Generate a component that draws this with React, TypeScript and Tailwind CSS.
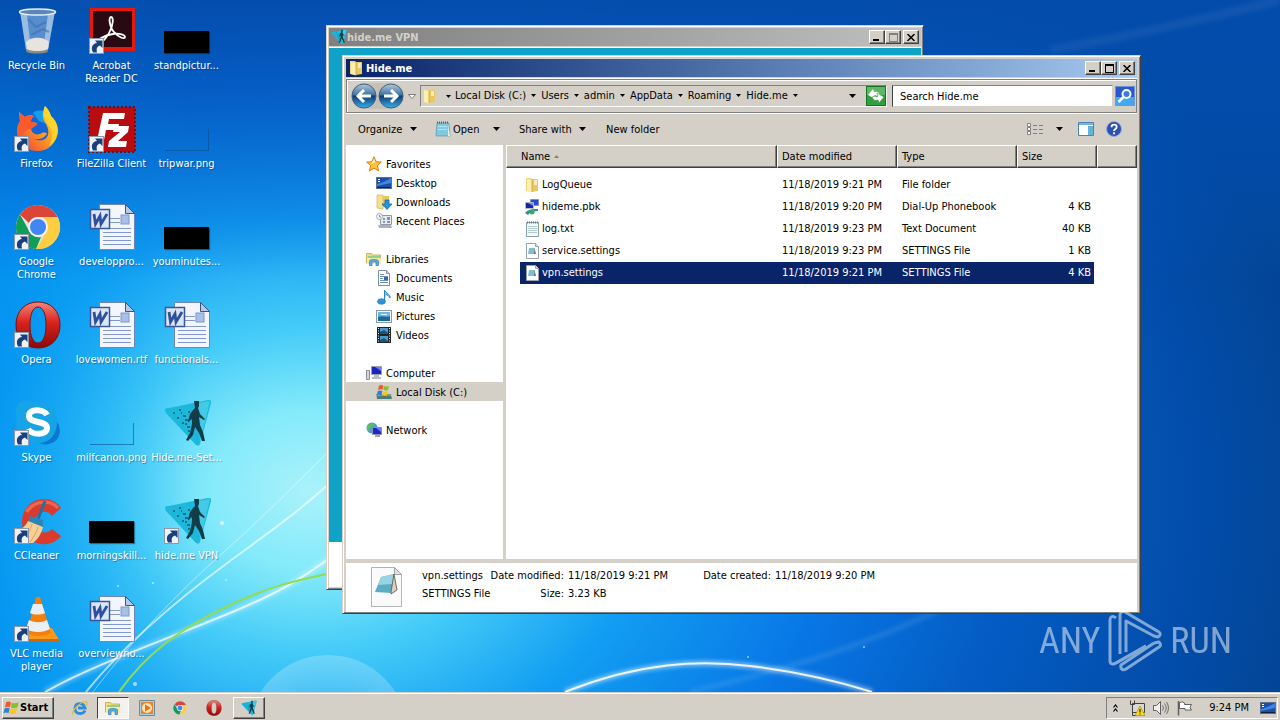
import type { ReactNode } from "react";

const frame =
    "flex flex-col border border-t-[#d4d0c8] border-l-[#d4d0c8] border-r-[#404040] border-b-[#404040] bg-[#d4d0c8] shadow-[inset_1px_1px_0_#fff,inset_-1px_-1px_0_#808080]";
const raised =
    "border border-t-white border-l-white border-r-[#404040] border-b-[#404040] bg-[#d4d0c8] shadow-[inset_-1px_-1px_0_#808080]";

/* ---------- wallpaper ---------- */

function Wallpaper() {
    return (
        <svg className="absolute inset-0 h-full w-full" viewBox="0 0 1280 692" preserveAspectRatio="none" aria-hidden="true">
            <defs>
                <radialGradient id="glow" gradientUnits="userSpaceOnUse" cx="310" cy="490" r="1000" gradientTransform="translate(310 490) scale(1 .8) translate(-310 -490)">
                    <stop offset="0" stopColor="#aaf2fa" />
                    <stop offset=".1" stopColor="#84eafa" />
                    <stop offset=".2" stopColor="#46ccf8" />
                    <stop offset=".34" stopColor="#129ef2" />
                    <stop offset=".52" stopColor="#0878e6" />
                    <stop offset=".7" stopColor="#045cc4" />
                    <stop offset=".9" stopColor="#024ca8" />
                    <stop offset="1" stopColor="#024596" />
                </radialGradient>
                <linearGradient id="leftShade" x1="0" x2="1" y1="0" y2="0">
                    <stop offset="0" stopColor="#0094f2" stopOpacity=".7" />
                    <stop offset="1" stopColor="#00a4f4" stopOpacity="0" />
                </linearGradient>
                <linearGradient id="topShade" x1="0" x2="0" y1="0" y2="1">
                    <stop offset="0" stopColor="#044cac" stopOpacity=".95" />
                    <stop offset=".4" stopColor="#0350b4" stopOpacity=".6" />
                    <stop offset="1" stopColor="#0358c8" stopOpacity="0" />
                </linearGradient>
                <radialGradient id="orb">
                    <stop offset="0" stopColor="#fff" stopOpacity="0" />
                    <stop offset="1" stopColor="#fff" stopOpacity=".22" />
                </radialGradient>
                <filter id="soft" x="-20%" y="-20%" width="140%" height="140%">
                    <feGaussianBlur stdDeviation="2" />
                </filter>
            </defs>
            <rect width="1280" height="692" fill="url(#glow)" />
            <rect width="190" height="692" fill="url(#leftShade)" />
            <rect width="1280" height="280" fill="url(#topShade)" />
            <circle cx="328" cy="735" r="80" fill="url(#orb)" />
            <g fill="none" stroke="#fff">
                <path d="M45 692C95 664 160 642 230 613S310 570 345 548" strokeWidth="5" opacity=".35" filter="url(#soft)" />
                <path d="M45 692C95 664 160 642 230 613S310 570 345 548" strokeWidth="2" opacity=".7" />
                <path d="M86 692C120 650 170 605 230 561S300 510 340 474" opacity=".6" strokeWidth="2" />
                <path d="M93 692C125 650 165 605 215 560S290 490 340 440" opacity=".45" />
                <path d="M565 692C640 662 700 660 750 666S840 682 872 692" strokeWidth="5" opacity=".5" filter="url(#soft)" />
                <path d="M565 692C640 662 700 660 750 666S840 682 872 692" strokeWidth="2" opacity=".85" />
                <path d="M690 692C780 670 860 650 960 600" strokeWidth="5" opacity=".1" filter="url(#soft)" />
                <path d="M1050 50C1110 40 1180 25 1280 0" strokeWidth="9" opacity=".05" filter="url(#soft)" />
            </g>
            <path d="M119 692C145 655 180 628 230 605S300 580 345 570" fill="none" stroke="#93dc50" strokeWidth="2" />
            <g fill="#fff" opacity=".6">
                <circle cx="222" cy="523" r="2" />
                <circle cx="135" cy="684" r="2" />
                <circle cx="226" cy="580" r="1" />
                <circle cx="153" cy="583" r="1" />
                <circle cx="118" cy="586" r="1" />
                <circle cx="864" cy="647" r="1" />
                <circle cx="748" cy="657" r="1" />
            </g>
        </svg>
    );
}

/* ---------- desktop icons, all on a 48px grid ---------- */

function Big({ children, shortcut }: { children: ReactNode; shortcut?: boolean }) {
    return (
        <svg className="h-12 w-12 shrink-0" viewBox="0 0 48 48" aria-hidden="true">
            {children}
            {shortcut && (
                <g>
                    <rect x="1.5" y="31.5" width="14" height="15" fill="#eef2f8" stroke="#8d98a8" />
                    <path d="M5 45.500c-2.500-5-.5-9 4-9.500l-2-2.500h7.500V41l-2.500-2.500c-3 1-4 3-3 7z" fill="#17407c" />
                </g>
            )}
        </svg>
    );
}

function RecycleBin() {
    return (
        <Big>
            <path d="M7 4l6 39c4 3 18 3 22 0l7-39z" fill="#8fb4dd" fillOpacity=".6" />
            <path d="M7 4l6 39 5 1-4-37zM42 4l-7 39-5 1 5-37z" fill="#dcebf8" fillOpacity=".5" />
            <path d="M13 35c6-6 18-5 23 0l-1 7c-5 3-16 3-21 0z" fill="#e6e4dc" />
            <path d="M15 12l8 8 10-5M18 28l12-6 6 3" stroke="#3d6fae" strokeWidth="2" fill="none" opacity=".6" />
            <ellipse cx="24.5" cy="5" rx="18" ry="3" fill="#5c86b8" stroke="#e4edf5" strokeWidth="1.5" />
            <path d="M13 42c5 3 17 3 22 0l-.5 3c-5 2-16 2-21 0z" fill="#8f8a7c" />
        </Big>
    );
}

function Acrobat() {
    return (
        <Big shortcut>
            <rect x="2" y="1" width="45" height="43" fill="#e5190d" />
            <rect x="5" y="4" width="39" height="36" fill="#2a0a12" />
            <path d="M23 10c3 0 2 8-1 14-3 7-8 12-11 11-3-2 6-7 14-8 7-1 12 1 12 3 0 3-7 0-11-5-4-4-6-15-3-15z" fill="none" stroke="#fff" strokeWidth="1.800" />
        </Big>
    );
}

function Firefox() {
    return (
        <Big shortcut>
            <defs>
                <linearGradient id="ff" x1="1" y1="0" x2="0" y2="1">
                    <stop offset="0" stopColor="#ffe13a" />
                    <stop offset=".5" stopColor="#ff9a1e" />
                    <stop offset="1" stopColor="#f0304a" />
                </linearGradient>
            </defs>
            <circle cx="26" cy="22" r="16" fill="#1565d8" />
            <path d="M20 8c5-4 12-3 16 3l-2 8-8-3z" fill="#12a0e8" />
            <path d="M32 1c3 3 5 6 6 10 7 6 8 15 6 20-3 10-11 15-19 15C12 46 4 38 4 27c0-5 1-8 3-11l-1-9 6 5c3-2 6-2 9-1-3 2-3 4-3 6l6 1c0 3-5 4-6 6 1 5 6 7 11 4 2-1 5 0 5 1-4 5-9 6-13 5 12 5 18-4 12-15-4-6-4-11-1-18z" fill="url(#ff)" />
            <path d="M32 1c3 3 5 6 6 10 7 6 8 15 6 20-1 4-4 8-8 10 5-9 3-17-2-23-4-6-4-12-2-17z" fill="#ffd92e" opacity=".8" />
            <path d="M7 16l-1-9 6 5c3-2 6-2 9-1-3 2-3 4-3 6l6 1c0 3-5 4-6 6-5 0-9 4-9 10-4-6-5-12-2-18z" fill="#fb5a30" />
        </Big>
    );
}

function FileZilla() {
    return (
        <Big shortcut>
            <rect x="1" y="2" width="46" height="45" fill="#b80c10" stroke="#7c0a10" strokeWidth="2" strokeDasharray="2 2" />
            <path d="M15 8h22l-1 6H21l-1 5h11l-1 6H18l-3 15H8z" fill="#fff" />
            <path d="M26 21h15l-1 6-10 9h9l-1 6H20l1-6 11-9h-7z" fill="#fff" />
        </Big>
    );
}

function ChromeDisc() {
    return (
        <g>
            <circle cx="25" cy="24" r="22" fill="#e2e2e2" />
            <path d="M25 2a22 22 0 0 1 19.500 12H25a10 10 0 0 0-9 6L7 11.500A22 22 0 0 1 25 2z" fill="#db4437" />
            <path d="M7 11.500l9.500 17A10 10 0 0 0 28 34l-5 12A22 22 0 0 1 7 11.500z" fill="#0f9d58" />
            <path d="M44.500 14A22 22 0 0 1 23 46l10.500-17a10 10 0 0 0 0-10 10 10 0 0 0-4-5z" fill="#ffcd40" />
            <circle cx="25" cy="24" r="10" fill="#f1f1f1" />
            <circle cx="25" cy="24" r="8" fill="#4285f4" />
        </g>
    );
}

function OperaDisc() {
    return (
        <g>
            <defs>
                <linearGradient id="op" x1="0" y1="0" x2="0" y2="1">
                    <stop offset="0" stopColor="#f4867a" />
                    <stop offset=".45" stopColor="#d8231c" />
                    <stop offset="1" stopColor="#8c0808" />
                </linearGradient>
            </defs>
            <path
                d="M25 1C12 1 3 10 3 24s9 23 22 23 22-9 22-23S38 1 25 1zm0 5c5 0 8 7 8 18s-3 18-8 18-8-7-8-18 3-18 8-18z"
                fillRule="evenodd"
                fill="url(#op)"
                stroke="#7b1010"
            />
        </g>
    );
}

function Skype() {
    return (
        <Big shortcut>
            <path d="M6 4c5-4 11-3 15-1 15-2 24 8 23 20 5 7 3 16-3 20-5 3-11 3-15 1C11 46 1 35 4 20 2 13 3 7 6 4z" fill="#16a4e6" />
            <path d="M44 23c5 7 3 16-3 20-5 3-11 3-15 1 10 0 18-8 18-21z" fill="#0a78d0" />
            <path d="M34 16c-3-6-18-7-18 1s18 4 18 12-16 7-19 1" fill="none" stroke="#fff" strokeWidth="6" />
        </Big>
    );
}

function CCleaner() {
    return (
        <Big shortcut>
            <path d="M48 11l-9 8c-5-8-17-4-17 6s11 14 17 7l9 7C36 54 10 48 9 25 9 1 38-5 48 11z" fill="#dc3a2c" />
            <path d="M12 14C20 2 38 0 46 10l-2 2C36 4 22 5 15 16z" fill="#f07a66" opacity=".7" />
            <path d="M32 4l-7 18" stroke="#24719f" strokeWidth="3" />
            <path d="M17 19l13 4v7l-15-5z" fill="#2b83b8" />
            <path d="M15 24l15 6c-2 8-6 13-10 16H9L2 35c6-2 10-5 13-11z" fill="#f5cf96" />
            <path d="M19 27c-2 7-5 11-7 15M25 30c-2 7-5 11-8 15" stroke="#d7a45f" fill="none" />
        </Big>
    );
}

function Vlc() {
    return (
        <Big shortcut>
            <path d="M9 33h30l7 12H6z" fill="#f79a1c" />
            <path d="M5 44h41v2H5z" fill="#d06a06" />
            <path d="M23 2h4l11 36c-6 4-18 4-24 0z" fill="#f57f0a" />
            <path d="M20 9h9l3 9c-4 2-11 2-15 0zM16 25c6 3 12 3 18 0l3 9c-7 4-17 4-24 0z" fill="#eceff2" />
        </Big>
    );
}

function WordDoc() {
    return (
        <Big>
            <path d="M11.500 1.500h26l9 9v36h-35z" fill="#f3f7fd" stroke="#6f86b8" />
            <path d="M37.500 1.500v9h9z" fill="#b9c9e8" stroke="#3c5484" />
            <path d="M22 15.500h10M22 19.500h10M15 25.500h28M15 29.500h28M15 33.500h28M15 37.500h28M15 41.500h28" stroke="#8398cc" />
            <rect x="33" y="12" width="8" height="9" fill="#a9c0e6" stroke="#7f98cc" />
            <rect x="2.5" y="6.5" width="19" height="19" fill="#dbe6f8" stroke="#3a55a0" strokeWidth="1.5" />
            <path d="M6 11l1.500 10L12 13l1 8 6-10" fill="none" stroke="#2f4f9f" strokeWidth="2.800" />
        </Big>
    );
}

function HideMark() {
    return (
        <g>
            <path d="M2 11c0-2 2-2 4-2L45 1c3 0 4 1 3 3L37 45c-1 2-3 2-5 0L3 14z" fill="#1cb8dc" />
            <path d="M35 4l12-2-10 42z" fill="#5cd6ee" opacity=".6" />
            <path d="M10 13h2v2h-2zM16 10h2v2h-2zM14 18h2v2h-2zM20 16h3v2h-3zM22 24h2v2h-2zM19 23h2v2h-2zM25 12h2v2h-2zM25 31h2v2h-2zM27 19h2v2h-2zM22 20h4v2h-4zM24 27h3v2h-3zM18 13h1v2h-1z" fill="#10718c" />
            <path d="M31 2h5v5l-1 2 2 6 5 5-1 1-5-3 1 8 3 7 2 9h-3l-3-8-4-6-2 8-5 6-2-1 4-7 2-9v-6l-3 4h-1l2-8 3-4 2-2z" fill="#123c48" />
        </g>
    );
}

function Thumb({ ghost }: { ghost?: boolean }) {
    return (
        <span className="flex h-12 w-12 items-end justify-center pb-[2px]">
            {ghost ? (
                <span className="h-[22px] w-11 border-r border-b border-[#0d4c8c]/60" />
            ) : (
                <span className="h-[22px] w-[45px] bg-black shadow-[1px_1px_1px_rgba(0,0,0,0.4)]" />
            )}
        </span>
    );
}

const desktopIcons: { label: string; icon: ReactNode }[][] = [
    [
        { label: "Recycle Bin", icon: <RecycleBin /> },
        { label: "Firefox", icon: <Firefox /> },
        { label: "Google\nChrome", icon: <Big shortcut><ChromeDisc /></Big> },
        { label: "Opera", icon: <Big shortcut><OperaDisc /></Big> },
        { label: "Skype", icon: <Skype /> },
        { label: "CCleaner", icon: <CCleaner /> },
        { label: "VLC media\nplayer", icon: <Vlc /> },
    ],
    [
        { label: "Acrobat\nReader DC", icon: <Acrobat /> },
        { label: "FileZilla Client", icon: <FileZilla /> },
        { label: "developpro...", icon: <WordDoc /> },
        { label: "lovewomen.rtf", icon: <WordDoc /> },
        { label: "milfcanon.png", icon: <Thumb ghost /> },
        { label: "morningskill...", icon: <Thumb /> },
        { label: "overviewno...", icon: <WordDoc /> },
    ],
    [
        { label: "standpictur...", icon: <Thumb /> },
        { label: "tripwar.png", icon: <Thumb ghost /> },
        { label: "youminutes...", icon: <Thumb /> },
        { label: "functionals...", icon: <WordDoc /> },
        { label: "Hide.me-Set...", icon: <Big><HideMark /></Big> },
        { label: "hide.me VPN", icon: <Big shortcut><HideMark /></Big> },
    ],
];

/* ---------- 16px icons ---------- */

function Small({ children, className = "h-4 w-4" }: { children: ReactNode; className?: string }) {
    return (
        <svg className={`shrink-0 ${className}`} viewBox="0 0 16 16" aria-hidden="true">
            {children}
        </svg>
    );
}

const FolderIcon = () => (
    <Small>
        <path d="M2 1h5l1 1v13l-6-1z" fill="#f0d678" />
        <path d="M7 2h7v12l-6 1z" fill="#e8c860" />
        <path d="M3 2l5 1v12.500L3 14z" fill="#fbeeb0" />
        <path d="M10 3h3v5h-3z" fill="#f8ecb4" />
        <path d="M8 3v12" stroke="#c9a23e" strokeWidth=".8" />
    </Small>
);
const StarIcon = () => (
    <Small>
        <path d="M8 .8l2.100 4.900 5.200.4-4 3.500 1.300 5.300L8 12.200l-4.600 2.700 1.300-5.300-4-3.500 5.200-.4z" fill="#ffc43a" stroke="#e07c14" />
        <path d="M8 2.500l1.200 3.800L5 8z" fill="#fff0b0" />
    </Small>
);
const DesktopIcon = () => (
    <Small>
        <rect x=".5" y="2.5" width="15" height="11" fill="#1b4ea8" stroke="#5a6f94" />
        <path d="M1 9c5-1 9-3 14-6v5L1 11z" fill="#3f86dc" />
        <path d="M1 12h14v1H1z" fill="#10203c" />
        <path d="M2 4h2v1H2zM2 6h2v1H2z" fill="#fff" />
    </Small>
);
const DownloadsIcon = () => (
    <Small>
        <path d="M1 1h6v14l-6-1z" fill="#f6e08c" stroke="#d1a83e" strokeWidth=".6" />
        <path d="M7 2h6v11H7z" fill="#e8c55c" />
        <path d="M9 6h4v4h3l-5 5.500L6 10h3z" fill="#2894dc" stroke="#0d5fa8" strokeWidth=".7" />
    </Small>
);
const RecentIcon = () => (
    <Small>
        <path d="M4.500 2.500h11v9h-11z" fill="#e6ebef" stroke="#8d99a5" />
        <path d="M2 12h13l1 3H3z" fill="#a8b1b9" />
        <path d="M7 5h2v2H7zM11 4h3v3h-3zM7 8h2v2H7zM11 8h3v2h-3z" fill="#7f98b0" />
        <circle cx="3.5" cy="3.5" r="3" fill="#f4f8fa" stroke="#8e9ba6" strokeWidth=".8" />
        <path d="M3.500 2v2h1.500" stroke="#3c6a90" fill="none" strokeWidth=".7" />
    </Small>
);
const LibrariesIcon = () => (
    <Small>
        <path d="M.5 2.500h5l1 1.500h8v8H.5z" fill="#f5dc82" stroke="#c9a23e" strokeWidth=".8" />
        <path d="M2 5h12v2H2z" fill="#8ed28c" />
        <path d="M1 7h14v6H1z" fill="#fae9a4" />
        <path d="M3.500 14.500V10c0-2 9-2 9 0v4.500h-2.500V11H6v3.500z" fill="#5aaede" stroke="#2f7fb8" strokeWidth=".7" />
    </Small>
);
const DocumentIcon = () => (
    <Small>
        <path d="M2.500.5h8l3 3v12h-11z" fill="#fff" stroke="#7e8fa4" />
        <path d="M10.500.5v3h3" fill="#cad6e4" stroke="#7e8fa4" />
        <path d="M4 4.500h4M4 6.500h8M4 8.500h3M4 10.500h8M4 12.500h8" stroke="#6f8fc0" />
        <path d="M8 7h4v3H8z" fill="#4464a0" />
    </Small>
);
const MusicIcon = () => (
    <Small>
        <path d="M8.500 12.500V1c1 3 6 4 5.500 8-1-2-2.500-3-4-3.500" fill="#7cc4ee" stroke="#2d86c4" />
        <ellipse cx="5.5" cy="12.5" rx="4" ry="2.800" fill="#2c94d8" stroke="#1b6ea8" strokeWidth=".6" />
    </Small>
);
const PicturesIcon = () => (
    <Small>
        <rect x=".5" y="2.5" width="15" height="12" fill="#f6f8fa" stroke="#8b98a8" />
        <path d="M2 4h12v9H2z" fill="#6ab8e4" />
        <path d="M2 9c4-2 8 1 12-1v5H2z" fill="#1c6a9c" />
        <path d="M5 6h6v1H5z" fill="#e4f4fc" />
    </Small>
);
const VideosIcon = () => (
    <Small>
        <path d="M1 0h14v16H1z" fill="#20262c" />
        <path d="M4 1h8v6H4zM4 9h8v6H4z" fill="#4a9ccc" />
        <path d="M4 5l4-2 4 3v1H4zM4 13l4-2 4 3v1H4z" fill="#1c5478" />
        <path d="M2.500 1v15M13.500 1v15" stroke="#e8eef2" strokeDasharray="1 1.500" />
    </Small>
);
const ComputerIcon = () => (
    <Small>
        <path d="M5.500 1.500h10v8h-10z" fill="#1b24c0" stroke="#9aa2b0" />
        <path d="M9 2h6v4z" fill="#6c7cf0" />
        <path d="M8 10h5v2H8zM6 12h9v2H6z" fill="#b8bcc4" />
        <path d="M.5 5.500h3v9h-3z" fill="#d4d8dc" stroke="#8a9098" />
    </Small>
);
const DiskIcon = () => (
    <Small>
        <path d="M0 10h15l1 5H1z" fill="#7d9a92" />
        <path d="M1 12h14l.5 3H1z" fill="#4c7c74" />
        <path d="M3 1.500c2-1 3-.5 4.500.3l-1 4C5 5 4 5 2 6z" fill="#ee5b26" />
        <path d="M8.300 2c1.500.8 3 .8 4.700 0l-1 4c-2 .8-3 .6-4.600-.2z" fill="#83c22c" />
        <path d="M1.800 7c2-1 3-.6 4.500.2l-1 4C4 10.500 2.500 10.500.8 11z" fill="#2f80dc" />
        <path d="M7.100 7.300c1.500.8 3 .8 4.700 0l-1 4c-2 .8-3 .5-4.600-.2z" fill="#fcc41c" />
    </Small>
);
const NetworkIcon = () => (
    <Small>
        <circle cx="6" cy="6" r="5.500" fill="#3fa0dc" />
        <path d="M2 3c3-3 5-2 7-.5L6 5 4 6 3 9C0 7 1 5 2 3z" fill="#64bc5c" />
        <path d="M6.500 5.500h9v7h-9z" fill="#1c28c8" stroke="#8a94a8" />
        <path d="M10 6h5v4z" fill="#6c7cf0" />
        <path d="M9 13h5v2H9z" fill="#a0a6b0" />
    </Small>
);
const PhonebookIcon = () => (
    <Small>
        <path d="M6.500.5h8v6h-8z" fill="#2a48d8" stroke="#8a94a8" />
        <path d="M1.500 3.500h8v6h-8z" fill="#1824a8" stroke="#b4bcc8" />
        <path d="M4 4h5v3z" fill="#6c84f0" />
        <path d="M1 14c3-4 9-4 13-4v2c-4 0-8 1-10 4z" fill="#2f8c98" />
        <circle cx="8" cy="13" r="2.500" fill="#38a86c" />
    </Small>
);
const TextIcon = () => (
    <Small>
        <path d="M2.500 1.500h12v14h-12z" fill="#f2f8f8" stroke="#8ba0a4" />
        <path d="M4 5.500h9M4 7.500h9M4 9.500h9M4 11.500h9" stroke="#b4cccc" />
        <path d="M3 1.500h11" stroke="#5e7a80" strokeDasharray="1 1" strokeWidth="2" />
    </Small>
);
const SettingsIcon = () => (
    <Small>
        <path d="M2.500.5h9l3 3v12h-12z" fill="#fff" stroke="#98a2ac" />
        <path d="M11.500.5v3h3" fill="#dde3e8" stroke="#98a2ac" />
        <path d="M5 5h6l-1 6H4z" fill="#7cc0d0" />
        <path d="M10.500 5l1.500 6h-2z" fill="#62747c" />
    </Small>
);
const NotepadIcon = () => (
    <Small>
        <path d="M2 2h12l1 13H1z" fill="#7fcade" stroke="#4690a8" strokeWidth=".6" />
        <path d="M13 3l2 12h-2z" fill="#e4ecf0" />
        <path d="M2 1.500h12" stroke="#4e646c" strokeWidth="2" strokeDasharray="1 1" />
        <path d="M3 5.500h9M3 8.500h9" stroke="#b4e4f0" />
    </Small>
);
const HideSmall = () => (
    <svg className="h-4 w-4 shrink-0" viewBox="0 0 49 48" aria-hidden="true">
        <HideMark />
    </svg>
);

function Caret({ wide }: { wide?: boolean }) {
    return (
        <svg className={wide ? "h-1 w-[7px] shrink-0" : "h-[3px] w-[5px] shrink-0"} viewBox="0 0 7 4" preserveAspectRatio="none" aria-hidden="true">
            <path d="M0 0h7L3.500 4z" />
        </svg>
    );
}

/* ---------- windows ---------- */

function CaptionButtons({ disabledMax }: { disabledMax?: boolean }) {
    const button = `flex h-[14px] w-4 items-center justify-center ${raised}`;
    return (
        <div className="ml-auto flex">
            <button className={button} aria-label="Minimize">
                <svg className="h-2 w-2" viewBox="0 0 8 8"><path d="M0 6h6v2H0z" /></svg>
            </button>
            <button className={button} aria-label="Maximize" disabled={disabledMax}>
                <svg className="h-[9px] w-[9px]" viewBox="0 0 9 9">
                    <path d="M0 0h9v9H0zM1 2v6h7V2z" fillRule="evenodd" fill={disabledMax ? "#808080" : "#000"} />
                </svg>
            </button>
            <button className={`ml-[2px] ${button}`} aria-label="Close">
                <svg className="h-[7px] w-2" viewBox="0 0 8 7"><path d="M.5 0l7 7M7.500 0l-7 7" stroke="#000" strokeWidth="1.500" /></svg>
            </button>
        </div>
    );
}

function VpnWindow() {
    return (
        <section className={`absolute top-[25px] right-[356px] bottom-[102px] left-[326px] p-[2px] ${frame}`}>
            <header className="flex h-[18px] shrink-0 items-center bg-linear-to-r from-[#808080] to-[#c0c0c0] px-[2px] font-bold text-[#d4d0c8]">
                <HideSmall />
                <span>hide.me VPN</span>
                <CaptionButtons disabledMax />
            </header>
            <div className="mt-px flex-1 border-t border-white bg-[#0fa3c9]" />
            <div className="h-[45px] shrink-0 bg-white" />
        </section>
    );
}

function NavArrow({ back }: { back?: boolean }) {
    return (
        <button className="h-[26px] w-[26px]" aria-label={back ? "Back" : "Forward"}>
            <svg className={back ? "h-full w-full" : "h-full w-full -scale-x-100"} viewBox="0 0 26 26">
                <defs>
                    <linearGradient id="navDisc" x1="0" y1="0" x2="0" y2="1">
                        <stop offset="0" stopColor="#b4c8dc" />
                        <stop offset=".45" stopColor="#3f74a4" />
                        <stop offset=".5" stopColor="#0c3c74" />
                        <stop offset="1" stopColor="#38b0ec" />
                    </linearGradient>
                </defs>
                <circle cx="13" cy="13" r="12" fill="url(#navDisc)" stroke="#45607c" />
                <path d="M20 13H8M13 7l-6 6 6 6" fill="none" stroke="#fff" strokeWidth="3" />
            </svg>
        </button>
    );
}

const crumbs = ["Local Disk (C:)", "Users", "admin", "AppData", "Roaming", "Hide.me"];

function AddressBar() {
    return (
        <div className="flex h-[34px] shrink-0 items-center border border-[#808080] pr-px pl-1 shadow-[inset_1px_1px_0_#fff,0_1px_0_#fff]">
            <div className="flex items-center gap-[1px] rounded-full bg-[#c4c0b8]">
                <NavArrow back />
                <NavArrow />
            </div>
            <button className="flex w-4 justify-center" aria-label="Recent locations">
                <svg className="h-[5px] w-2" viewBox="0 0 8 5"><path d="M.5.5h7L4 4.500z" fill="#fff" stroke="#606060" strokeWidth=".8" /></svg>
            </button>
            <nav className="flex h-[22px] flex-1 items-center border border-t-[#808080] border-l-[#808080] border-r-white border-b-white" aria-label="Address">
                <FolderIcon />
                <span className="flex w-[18px] justify-center pl-1"><Caret /></span>
                {crumbs.map((name) => (
                    <span key={name} className="flex items-center pb-px">
                        <a href="#" className="text-black">{name}</a>
                        <span className="flex w-[15px] justify-center"><Caret /></span>
                    </span>
                ))}
                <button className="mr-[10px] ml-auto" aria-label="Previous locations"><Caret wide /></button>
                <button className="h-5 w-5" aria-label="Refresh">
                    <svg viewBox="0 0 20 20">
                        <rect x=".5" y=".5" width="19" height="19" fill="#2ea03c" stroke="#187424" />
                        <path d="M1 1h18v8H1z" fill="#5cb866" />
                        <path d="M2 9l5-6 1 3c3-1 5 0 6 3l-3 1c-1-1-2-1-3 0l1 3z" fill="#fff" />
                        <path d="M18 11l-5 6-1-3c-3 1-5 0-6-3l3-1c1 1 2 1 3 0l-1-3z" fill="#fff" stroke="#1c7c2c" strokeWidth=".5" />
                    </svg>
                </button>
            </nav>
            <input
                type="text"
                aria-label="Search Hide.me"
                placeholder="Search Hide.me"
                className="ml-[5px] h-[22px] w-[221px] border border-t-[#808080] border-l-[#404040] border-r-[#d4d0c8] border-b-[#d4d0c8] bg-white pl-[7px] placeholder:text-black"
            />
            <button className="ml-[2px] h-5 w-5" aria-label="Search">
                <svg viewBox="0 0 20 20">
                    <rect x=".5" y=".5" width="19" height="19" fill="#2a58cc" stroke="#6c94d8" />
                    <path d="M1 11h18v8H1z" fill="#44a8f0" />
                    <circle cx="11.5" cy="8" r="4" fill="#3c7ce0" stroke="#fff" strokeWidth="2" />
                    <path d="M8.500 11l-5 5" stroke="#fff" strokeWidth="2.500" />
                </svg>
            </button>
        </div>
    );
}

function Toolbar() {
    return (
        <div className="flex h-8 shrink-0 items-center pr-[15px] pl-3">
            <button className="flex w-[77px] items-center justify-between pr-[18px]">Organize <Caret wide /></button>
            <button className="flex w-[47px] items-center gap-[2px]"><NotepadIcon /> Open</button>
            <button className="flex w-[37px] items-center pl-[11px]" aria-label="Open with"><Caret wide /></button>
            <button className="flex w-[67px] items-center justify-between">Share with <Caret wide /></button>
            <button className="ml-5">New folder</button>
            <div className="ml-auto flex items-center">
                <button aria-label="Change view">
                    <Small>
                        <path d="M.5 2.500h3v3h-3zM.5 6.500h3v3h-3zM.5 10.500h3v3h-3z" fill="#fff" stroke="#808080" />
                        <path d="M6 4.500h4M12 4.500h4M6 8.500h4M12 8.500h4M6 12.500h4M12 12.500h4" stroke="#808080" />
                    </Small>
                </button>
                <button className="ml-[13px]" aria-label="More view options"><Caret wide /></button>
                <button className="ml-[15px]" aria-label="Show the preview pane">
                    <Small>
                        <path d="M.5 1.500h15v13H.5z" fill="#fff" stroke="#4c84b0" />
                        <path d="M1 2h14v2H1z" fill="#7cb4dc" />
                        <path d="M10 5h5v9h-5z" fill="#64b4dc" />
                    </Small>
                </button>
                <button className="ml-3" aria-label="Help">
                    <Small>
                        <circle cx="8" cy="8" r="7.500" fill="#2c50b4" stroke="#98acd8" />
                        <path d="M5.500 6.200c0-3.400 5.200-3.200 5.200-.2C10.700 8 8 7.800 8 10M8 11.200v2" fill="none" stroke="#fff" strokeWidth="1.800" />
                    </Small>
                </button>
            </div>
        </div>
    );
}

const places = [
    {
        name: "Favorites",
        icon: <StarIcon />,
        items: [
            { name: "Desktop", icon: <DesktopIcon /> },
            { name: "Downloads", icon: <DownloadsIcon /> },
            { name: "Recent Places", icon: <RecentIcon /> },
        ],
    },
    {
        name: "Libraries",
        icon: <LibrariesIcon />,
        items: [
            { name: "Documents", icon: <DocumentIcon /> },
            { name: "Music", icon: <MusicIcon /> },
            { name: "Pictures", icon: <PicturesIcon /> },
            { name: "Videos", icon: <VideosIcon /> },
        ],
    },
    { name: "Computer", icon: <ComputerIcon />, items: [{ name: "Local Disk (C:)", icon: <DiskIcon />, active: true }] },
    { name: "Network", icon: <NetworkIcon />, items: [] },
];

function NavPane() {
    return (
        <nav className="flex w-[157px] shrink-0 flex-col gap-[19px] bg-white pt-[9px]" aria-label="Places">
            {places.map((group) => (
                <ul key={group.name}>
                    <li>
                        <a href="#" className="flex h-[19px] items-center gap-1 pt-px pl-5 text-black">{group.icon}{group.name}</a>
                    </li>
                    {group.items.map((item) => (
                        <li key={item.name}>
                            <a href="#" className={`flex h-[19px] items-center gap-1 pt-px pl-[30px] text-black ${"active" in item ? "bg-[#d4d0c8]" : ""}`}>
                                {item.icon}{item.name}
                            </a>
                        </li>
                    ))}
                </ul>
            ))}
        </nav>
    );
}

const files = [
    { name: "LogQueue", icon: <FolderIcon />, date: "11/18/2019 9:21 PM", type: "File folder", size: "" },
    { name: "hideme.pbk", icon: <PhonebookIcon />, date: "11/18/2019 9:20 PM", type: "Dial-Up Phonebook", size: "4 KB" },
    { name: "log.txt", icon: <TextIcon />, date: "11/18/2019 9:23 PM", type: "Text Document", size: "40 KB" },
    { name: "service.settings", icon: <SettingsIcon />, date: "11/18/2019 9:23 PM", type: "SETTINGS File", size: "1 KB" },
    { name: "vpn.settings", icon: <SettingsIcon />, date: "11/18/2019 9:21 PM", type: "SETTINGS File", size: "4 KB", selected: true },
];

function FileList() {
    const head = `h-[23px] pl-1 text-left font-normal ${raised}`;
    return (
        <div className="flex-1 bg-white">
            <table className="w-full table-fixed border-separate border-spacing-0">
                <colgroup>
                    <col />
                    <col className="w-[120px]" />
                    <col className="w-[120px]" />
                    <col className="w-20" />
                    <col className="w-10" />
                </colgroup>
                <thead>
                    <tr>
                        <th className={`h-[23px] pl-[14px] text-left font-normal ${raised}`}>
                            <span className="flex items-center gap-1">
                                Name
                                <svg className="h-[3px] w-[5px]" viewBox="0 0 5 3" aria-hidden="true"><path d="M0 3h5L2.500 0z" fill="#808080" /></svg>
                            </span>
                        </th>
                        <th className={head}>Date modified</th>
                        <th className={head}>Type</th>
                        <th className={head}>Size</th>
                        <th className={head} aria-label="Unused" />
                    </tr>
                </thead>
                <tbody className="leading-[22px] before:block before:h-[6px] before:content-['']">
                    {files.map((file) => {
                        const tone = file.selected ? "bg-[#0a246a] text-white" : "";
                        return (
                            <tr key={file.name} className="whitespace-nowrap">
                                <td><div className={`ml-[14px] flex h-[22px] items-center gap-[2px] pl-1 ${tone}`}>{file.icon}{file.name}</div></td>
                                <td><div className={`h-[22px] pl-[5px] ${tone}`}>{file.date}</div></td>
                                <td><div className={`h-[22px] pl-[5px] ${tone}`}>{file.type}</div></td>
                                <td><div className={`mr-[3px] h-[22px] pr-[3px] text-right ${tone}`}>{file.size}</div></td>
                                <td />
                            </tr>
                        );
                    })}
                </tbody>
            </table>
        </div>
    );
}

function DetailsPane() {
    return (
        <footer className="flex h-[49px] shrink-0 items-start bg-white pt-1 pl-[25px]">
            <svg className="h-10 w-8 shrink-0" viewBox="0 0 32 40" aria-hidden="true">
                <path d="M.5.500h23l7 7v32H.5z" fill="#fafafa" stroke="#b4b4b4" />
                <path d="M23.500.500v7h7z" fill="#e0e0e0" stroke="#a4a4a4" />
                <path d="M10 10l13-3-3 19-16-1z" fill="#5cacc4" />
                <path d="M10 10l13-3-2 10-14 1z" fill="#98d4e2" />
                <path d="M23 7l3 16-6 4v-2z" fill="#d8d0c4" stroke="#5c4c40" strokeWidth=".8" />
            </svg>
            <dl className="ml-[19px] grid grid-cols-[68px_74px_136px_71px_auto] leading-[18px] whitespace-nowrap">
                <dt>vpn.settings</dt>
                <dt className="text-right">Date modified:</dt>
                <dd className="pl-1">11/18/2019 9:21 PM</dd>
                <dt className="text-right">Date created:</dt>
                <dd className="pl-1">11/18/2019 9:20 PM</dd>
                <dt>SETTINGS File</dt>
                <dt className="text-right">Size:</dt>
                <dd className="pl-1">3.23 KB</dd>
            </dl>
        </footer>
    );
}

function ExplorerWindow() {
    return (
        <section className={`absolute top-[55px] right-[139px] bottom-[78px] left-[342px] p-[3px] pb-px ${frame}`}>
            <header className="flex h-[18px] shrink-0 items-center gap-[2px] bg-linear-to-r from-[#0a246a] to-[#a6caf0] px-[2px] font-bold text-white">
                <FolderIcon />
                <span>Hide.me</span>
                <CaptionButtons />
            </header>
            <div className="mt-px h-px shrink-0 bg-white" />
            <AddressBar />
            <Toolbar />
            <main className="flex min-h-0 flex-1 gap-[3px]">
                <NavPane />
                <FileList />
            </main>
            <div className="h-1 shrink-0" />
            <DetailsPane />
        </section>
    );
}

/* ---------- watermark and taskbar ---------- */

function Watermark() {
    return (
        <div className="absolute right-12 bottom-5 flex h-[62px] items-center gap-2 font-['Liberation_Sans_Narrow','Roboto_Condensed','Liberation_Sans',sans-serif] text-4xl leading-none text-white opacity-50">
            <span>ANY</span>
            <svg className="h-[62px] w-[54px]" viewBox="0 0 54 62" fill="none" stroke="#fff" strokeWidth="3" strokeLinejoin="round" aria-hidden="true">
                <path d="M8 8c-4-3-6-1-6 2v41c0 3 3 4 6 2l30-17" />
                <path d="M12 44V5c0-3 3-4 5-3l34 20c2 2 1 4-1 5l-4-1L18 11v31" />
                <path d="M8 53l30-17M46 33l5-1c2 2 2 4 0 5L18 59c-3 2-6 0-5-4l33-22" />
            </svg>
            <span>RUN</span>
        </div>
    );
}

function Taskbar() {
    return (
        <footer className="flex h-7 shrink-0 items-center border-t border-[#d4d0c8] bg-[#d4d0c8] pt-[2px] pr-[2px] pl-[2px] shadow-[inset_0_1px_0_#fff]">
            <button className={`flex h-[22px] w-[52px] items-center font-bold ${raised}`}>
                <Small className="h-[18px] w-[17px]">
                    <path d="M3 2.500c2-1 3-.5 4.500.3l-1 4.700C5 6.500 4 6.500 1.800 7.300z" fill="#ee5b26" />
                    <path d="M8.300 3c1.800.9 4 .9 6.500-.4l-1.300 5c-2.500 1-4.500.8-6.200-.2z" fill="#83c22c" />
                    <path d="M1.600 8.200c2-.8 3.200-.6 4.700.2l-1.100 4.500C3.500 12 2.300 12.200.4 13z" fill="#2f80dc" />
                    <path d="M7.100 8.300c1.800.9 3.800.9 6.200 0l-1.300 4.700c-2.300 1-4.400.8-6-.2z" fill="#fcc41c" />
                </Small>
                Start
            </button>
            <div className="ml-[18px] flex items-center">
                <button aria-label="Internet Explorer">
                    <Small>
                        <path d="M13 10.500c-2 4.500-10 4-10-2s8-7 10-.5H6" fill="none" stroke="#2c8ce0" strokeWidth="2.800" />
                        <path d="M1 14.500C-1 12 7 2 14 1.500c2 .5 1 3-.5 4.500" fill="none" stroke="#eab82c" strokeWidth="1.200" />
                    </Small>
                </button>
                <button className="ml-[9px] flex h-[22px] w-8 items-center justify-center border border-t-[#404040] border-l-[#404040] border-r-white border-b-white bg-[#f4f2ee]" aria-label="Hide.me folder">
                    <LibrariesIcon />
                </button>
                <button className="ml-[10px]" aria-label="Windows Media Player">
                    <Small>
                        <path d="M.5.5h15v15H.5z" fill="#a8d0ec" stroke="#5c8cb8" />
                        <path d="M2 2h12v12H2z" fill="#f08418" />
                        <circle cx="8" cy="8" r="5" fill="#fbe4c4" />
                        <path d="M6 4.500v7L12 8z" fill="#e8700c" />
                    </Small>
                </button>
                <button className="ml-[18px]" aria-label="Google Chrome">
                    <svg className="h-[14px] w-[14px]" viewBox="2 1 46 46"><ChromeDisc /></svg>
                </button>
                <button className="ml-[19px]" aria-label="Opera">
                    <svg className="h-4 w-4" viewBox="2 0 46 48"><OperaDisc /></svg>
                </button>
                <button className={`ml-[11px] flex h-[22px] w-8 items-center justify-center ${raised}`} aria-label="hide.me VPN">
                    <HideSmall />
                </button>
            </div>
            <div className="ml-auto flex h-[22px] items-center border border-t-[#808080] border-l-[#808080] border-r-white border-b-white pr-px pl-[6px]">
                <button aria-label="Show hidden icons">
                    <svg className="h-2 w-[5px]" viewBox="0 0 5 8" fill="none" stroke="#000" strokeWidth="1.200"><path d="M.5 3.500l2-2.500 2 2.500M.5 7.500l2-2.500 2 2.500" /></svg>
                </button>
                <button className="ml-[11px]" aria-label="Network">
                    <Small>
                        <path d="M3.500 3.500h12v9h-12z" fill="#d8d8d8" stroke="#404040" />
                        <path d="M1.500.5v4h4v-4M3.500 5v10.500h4" fill="none" stroke="#404040" />
                        <path d="M11 6l5 9.500H6z" fill="#f8dc20" stroke="#a08000" strokeWidth=".6" />
                        <path d="M11 9v3.500M11 13.500v1" stroke="#000" />
                    </Small>
                </button>
                <button className="ml-2" aria-label="Volume">
                    <Small>
                        <path d="M.5 5.500h3l4-4v13l-4-4h-3z" fill="#f0f0f0" stroke="#606060" />
                        <path d="M9.500 5.500q2 2.500 0 5M11.500 3.500q3.500 4.500 0 9M13.500 2q4 6 0 12" fill="none" stroke="#707070" />
                    </Small>
                </button>
                <button className="ml-2" aria-label="Action Center">
                    <Small>
                        <path d="M1.500 1v14.500" stroke="#606060" strokeWidth="1.500" />
                        <path d="M2.500 2.500q3-1.500 5 .5v1.500h7l-1.500 3 1.500 2.500H8V8.500H2.500z" fill="#fff" stroke="#606060" />
                    </Small>
                </button>
                <time className="ml-4">9:24 PM</time>
                <button className="ml-[11px]" aria-label="Show desktop"><DesktopIcon /></button>
            </div>
        </footer>
    );
}

export default function App() {
    return (
        <div className="flex h-screen flex-col overflow-hidden font-['DejaVu_Sans_Condensed','Noto_Sans',sans-serif] text-[11px] leading-[13px] text-black">
            <div className="relative min-h-0 flex-1 overflow-hidden bg-[#0358c8]">
                <Wallpaper />
                <div className="relative -ml-px flex pt-[7px]">
                    {desktopIcons.map((column, i) => (
                        <ul key={i} className="w-[75px]">
                            {column.map((item) => (
                                <li key={item.label} className="flex h-[98px] flex-col items-center gap-1">
                                    {item.icon}
                                    <span className="text-center whitespace-pre text-white [text-shadow:1px_1px_1px_rgba(0,30,80,0.4)]">{item.label}</span>
                                </li>
                            ))}
                        </ul>
                    ))}
                </div>
                <VpnWindow />
                <ExplorerWindow />
                <Watermark />
            </div>
            <Taskbar />
        </div>
    );
}
